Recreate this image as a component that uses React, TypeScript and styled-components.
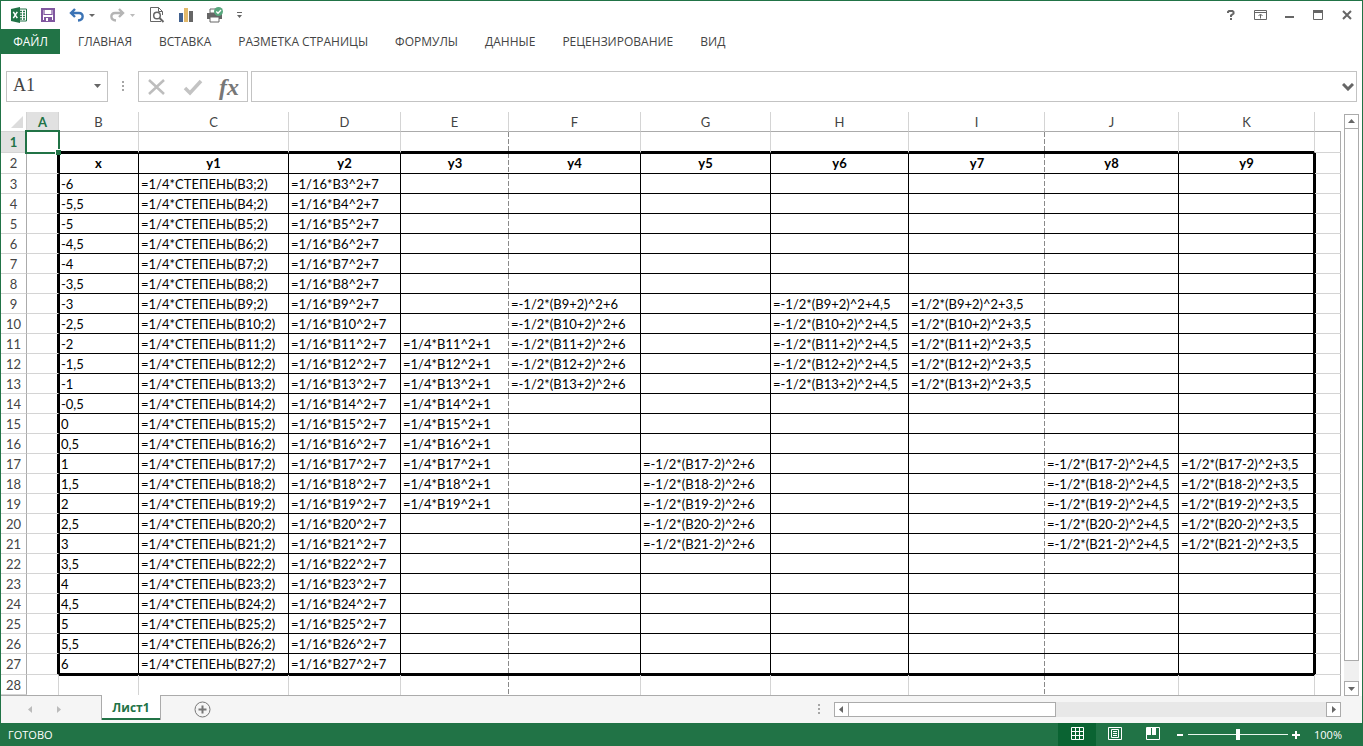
import React from 'react';
import styled, { createGlobalStyle, css } from 'styled-components';

const GREEN = '#217346';
const UI = '"Open Sans", "Noto Sans", sans-serif';

const GlobalStyle = createGlobalStyle`
  *, *::before, *::after { box-sizing: border-box; }
  body { margin: 0; background: #fff; }
  button, input { font: inherit; color: inherit; }
  button { background: none; border: 0; padding: 0; display: flex; align-items: center; justify-content: center; }
  svg { display: block; }
`;

const Window = styled.div`
  display: flex;
  flex-direction: column;
  min-height: 100vh;
  border: 1px solid ${GREEN};
  border-bottom: 0;
  background: #fff;
  color: #444;
  font: 12px/16px ${UI};
`;

const TitleBar = styled.header`
  display: flex;
  justify-content: space-between;
  height: 28px;
  padding: 0 5px 0 8px;
`;
const ToolGroup = styled.div<{ $gap: number }>`
  display: flex;
  align-items: center;
  gap: ${p => p.$gap}px;
`;
const IconButton = styled.button<{ $w?: number }>`
  width: ${p => p.$w ?? 20}px;
  height: 20px;
`;
const RedoButton = styled(IconButton)`
  padding-left: 10px;
`;

const Ribbon = styled.nav`
  display: flex;
  align-items: stretch;
  height: 25px;
  gap: 27px;
`;
const RibbonTab = styled.button`
  color: #444;
`;
const FileTab = styled(RibbonTab)`
  width: 59px;
  background: ${GREEN};
  color: #fff;
  margin-right: -9px;
`;

const FormulaRow = styled.div`
  display: flex;
  margin: 17px 5px 10px 5px;
  height: 31px;
`;
const Box = styled.div`
  display: flex;
  align-items: center;
  border: 1px solid #c3c3c3;
`;
const NameBox = styled(Box)`
  width: 102px;
  padding: 0 6px;
`;
const NameInput = styled.input`
  flex: 1;
  min-width: 0;
  height: 26px;
  border: 0;
  padding: 0 0 2px;
  outline: 0;
  font: 18px/24px "Liberation Serif", serif;
`;
const Dots = styled.div`
  display: flex;
  align-items: center;
  justify-content: center;
  width: 30px;
`;
const FxBox = styled(Box)`
  width: 110px;
  justify-content: space-between;
  padding: 0 8px;
  margin-right: 3px;
`;
const FxButton = styled.button`
  font: italic 700 24px/24px "Liberation Serif", serif;
  color: #777;
`;
const FormulaBox = styled(Box)`
  flex: 1;
  padding-right: 2px;
`;
const FormulaInput = styled.input`
  flex: 1;
  height: 28px;
  border: 0;
  outline: 0;
  background: transparent;
`;

const SheetArea = styled.main`
  display: flex;
  flex: 1;
`;
const Grid = styled.table`
  flex: 1;
  width: 0;
  table-layout: fixed;
  border-collapse: separate;
  border-spacing: 0;
  border-bottom: 1px solid #ababab;
  font-family: Lato, "Open Sans", sans-serif;
  font-size: 13px;
  line-height: 18px;
`;
const Row = styled.tr<{ $h: number }>`
  height: ${p => p.$h}px;
`;
const headBase = css<{ $on?: boolean }>`
  padding: 0;
  text-align: center;
  color: ${p => (p.$on ? GREEN : '#444')};
  font-weight: ${p => (p.$on ? 700 : 400)};
  background: ${p => (p.$on ? '#e1e1e1' : '#fff')};
`;
const ColHead = styled.th<{ $on?: boolean }>`
  ${headBase}
  border-right: 1px solid #d4d4d4;
  border-bottom: 1px solid ${p => (p.$on ? GREEN : '#ababab')};
`;
const FillerHead = styled.td`
  padding: 0;
  border-bottom: 1px solid #ababab;
`;
const RowHead = styled.th<{ $on?: boolean }>`
  ${headBase}
  border-right: 1px solid #ababab;
  border-bottom: 1px solid #d4d4d4;
`;
const Corner = styled.td`
  padding: 0 3px 3px 0;
  border-bottom: 1px solid #d4d4d4;
  border-right: 1px solid #d4d4d4;
  vertical-align: bottom;
  svg { margin-left: auto; }
`;
const Cell = styled.td<{ $right: string; $bottom: string; $shadow: string; $head?: boolean; $dashed?: boolean }>`
  position: relative;
  padding: ${p => (p.$head ? 0 : '0 0 0 2px')};
  overflow: hidden;
  white-space: nowrap;
  color: #000;
  border-right: ${p => p.$right};
  border-bottom: ${p => p.$bottom};
  box-shadow: ${p => p.$shadow};
  text-align: ${p => (p.$head ? 'center' : 'left')};
  font-weight: ${p => (p.$head ? 700 : 400)};
  ${p => p.$dashed && css`
    background: repeating-linear-gradient(#8a8a8a 0 5px, #fff 5px 7px) right top / 1px 100% no-repeat;
  `}
`;
const ActiveCell = styled(Cell)`
  overflow: visible;
`;
const Selection = styled.div`
  position: absolute;
  inset: -2px;
  border: 2px solid ${GREEN};
  z-index: 1;
  &::after {
    content: '';
    position: absolute;
    right: -3px;
    bottom: -3px;
    width: 6px;
    height: 6px;
    background: ${GREEN};
    border-left: 1px solid #fff;
    border-top: 1px solid #fff;
  }
`;

const VScroll = styled.div`
  display: flex;
  flex-direction: column;
  width: 15px;
  margin: 2px 3px 0 3px;
  background: #f0f0f0;
`;
const ScrollButton = styled.button`
  width: 15px;
  height: 15px;
  border: 1px solid #ababab;
  background: #fff;
  flex: none;
`;
const VThumb = styled.div`
  height: 533px;
  margin-top: -1px;
  margin-bottom: auto;
  border: 1px solid #ababab;
  background: #fff;
`;

const TabBar = styled.div`
  display: flex;
  height: 27px;
  background: #f5f5f5;
`;
const SheetNav = styled.div`
  display: flex;
  align-items: center;
  width: 100px;
  padding-left: 19px;
  gap: 9px;
`;
const SheetTab = styled.button`
  width: 60px;
  height: 25px;
  background: #fff;
  border: solid #ababab;
  border-width: 0 1px;
  box-shadow: inset 0 -2px ${GREEN};
  margin-top: -1px;
  color: ${GREEN};
  font: 700 12px/18px ${UI};
`;
const AddSheet = styled.button`
  margin-left: 32px;
  width: 18px;
`;
const TabSpacer = styled.div`
  flex: 1;
`;
const HScroll = styled.div`
  display: flex;
  width: 507px;
  height: 15px;
  margin: 6px 21px 0 0;
  background: #e8e8e8;
`;
const HThumb = styled.div`
  width: 208px;
  margin-left: -1px;
  margin-right: auto;
  border: 1px solid #ababab;
  background: #fff;
`;

const StatusBar = styled.footer`
  display: flex;
  align-items: center;
  justify-content: space-between;
  height: 23px;
  padding: 0 21px 0 8px;
  margin: 0 -1px;
  background: ${GREEN};
  color: #fff;
  font-size: 11px;
`;
const ViewGroup = styled.div`
  display: flex;
  align-items: center;
`;
const ViewButton = styled.button<{ $on?: boolean }>`
  width: 38px;
  height: 23px;
  padding-bottom: 2px;
  background: ${p => (p.$on ? '#0a6332' : 'transparent')};
`;
const ZoomButton = styled.button`
  width: 16px;
  height: 23px;
`;
const ZoomRange = styled.input`
  appearance: none;
  width: 100px;
  height: 12px;
  margin: 0;
  background: linear-gradient(#e8f5ec, #e8f5ec) center / 100% 1px no-repeat;
  &::-webkit-slider-thumb {
    appearance: none;
    width: 4px;
    height: 11px;
    background: #fff;
  }
`;
const ZoomValue = styled.span`
  width: 38px;
  text-align: right;
`;

const letters = ['A', 'B', 'C', 'D', 'E', 'F', 'G', 'H', 'I', 'J', 'K'];
const widths = [32, 80, 150, 112, 108, 132, 130, 138, 136, 134, 136];
const rows = Array.from({ length: 28 }, (_, i) => i + 1);
const tall = [1, 2, 27];
const pageBreaks = ['E', 'I'];

const between = (r: number, a: number, b: number) => r >= a && r <= b;

function cellText(col: string, r: number): string {
  if (r === 2) return col === 'B' ? 'x' : col === 'A' ? '' : 'y' + (letters.indexOf(col) - 1);
  if (!between(r, 3, 27)) return '';
  switch (col) {
    case 'B': return String((r - 15) / 2).replace('.', ',');
    case 'C': return `=1/4*СТЕПЕНЬ(B${r};2)`;
    case 'D': return `=1/16*B${r}^2+7`;
    case 'E': return between(r, 11, 19) ? `=1/4*B${r}^2+1` : '';
    case 'F': return between(r, 9, 13) ? `=-1/2*(B${r}+2)^2+6` : '';
    case 'G': return between(r, 17, 21) ? `=-1/2*(B${r}-2)^2+6` : '';
    case 'H': return between(r, 9, 13) ? `=-1/2*(B${r}+2)^2+4,5` : '';
    case 'I': return between(r, 9, 13) ? `=1/2*(B${r}+2)^2+3,5` : '';
    case 'J': return between(r, 17, 21) ? `=-1/2*(B${r}-2)^2+4,5` : '';
    case 'K': return between(r, 17, 21) ? `=1/2*(B${r}-2)^2+3,5` : '';
    default: return '';
  }
}

// Borders of one cell; the medium frame round B2:K27 is a border line plus an inset line on both sides.
function cellLines(c: number, r: number) {
  const inCols = c >= 1 && c <= 10;
  const inRows = r >= 2 && r <= 27;
  const light = '1px solid #d4d4d4';
  const black = '1px solid #000';
  const dashed = pageBreaks.includes(letters[c]);
  let right = inRows && c <= 10 ? black : light;
  if (dashed) right = '0';
  if (c === 11) right = '1px solid #ababab';
  const bottom = inCols && r >= 1 && r <= 27 ? black : light;
  const s: string[] = [];
  if (inCols && (r === 1 || r === 27)) s.push('inset 0 -1px #000');
  if (inCols && (r === 2 || r === 28)) s.push('inset 0 1px #000');
  if (inRows && (c === 0 || c === 10)) s.push('inset -1px 0 #000');
  if (inRows && (c === 1 || c === 11)) s.push('inset 1px 0 #000');
  return { right, dashed, bottom: r === 28 ? '0' : bottom, shadow: s.join(', ') || 'none' };
}

const Arrow = ({ d, fill = '#666', w = 7, h = 7 }: { d: string; fill?: string; w?: number; h?: number }) => (
  <svg width={w} height={h} viewBox={`0 0 ${w} ${h}`}><path d={d} fill={fill} /></svg>
);

const ThreeDots = () => (
  <svg width="3" height="11" fill="#a6a6a6"><path d="M0 0h2v2H0zM0 4h2v2H0zM0 8h2v2H0z" /></svg>
);

function QuickAccess() {
  return (
    <ToolGroup $gap={0}>
      <IconButton aria-label="Excel">
        <svg width="18" height="18" viewBox="0 0 18 18">
          <path d="M9 3h7.500v12H9z" fill="#fff" stroke={GREEN} />
          <path d="M10 5.500h2m1 0h2M10 8h2m1 0h2m-5 2.500h2m1 0h2M10 13h2m1 0h2" stroke={GREEN} strokeWidth="1.300" />
          <path d="M1 3l9-2v16l-9-2z" fill={GREEN} />
          <path d="M3.300 5.800l4 6.400M7.300 5.800l-4 6.400" stroke="#fff" strokeWidth="1.500" />
        </svg>
      </IconButton>
      <IconButton aria-label="Сохранить" $w={38}>
        <svg width="16" height="16" viewBox="0 0 16 16">
          <path d="M2 2h12v12H2z" fill="#fff" stroke="#80579f" strokeWidth="2" />
          <path d="M4 2v5.500h8V2" stroke="#80579f" strokeWidth="1.200" fill="none" />
          <path d="M4 10h8v4H4z" fill="#80579f" /><path d="M6 11h2v3H6z" fill="#fff" />
        </svg>
      </IconButton>
      <IconButton aria-label="Отменить">
        <svg width="16" height="16" viewBox="0 0 16 16">
          <path d="M6 2L2 6l4 4M2.500 6H10c5 0 5 7-1 7.500" fill="none" stroke="#3b73b5" strokeWidth="2.400" />
        </svg>
      </IconButton>
      <IconButton aria-label="Список отмены" $w={10}><Arrow d="M0 2h6L3 5z" w={6} /></IconButton>
      <RedoButton aria-label="Вернуть" $w={30}>
        <svg width="16" height="16" viewBox="0 0 16 16">
          <path d="M10 2l4 4-4 4M13.500 6H6C1 6 1 13 7 13.500" fill="none" stroke="#b5b5b5" strokeWidth="2.400" />
        </svg>
      </RedoButton>
      <IconButton aria-label="Список возврата" $w={10}><Arrow d="M0 2h5L2.500 5z" w={5} fill="#bbb" /></IconButton>
      <IconButton aria-label="Просмотр" $w={40}>
        <svg width="16" height="18" viewBox="0 0 16 18" fill="none" stroke="#666">
          <path d="M12 15.500H1.500v-14h8l4 4V9M9.500 1.500v4h4" />
          <circle cx="8" cy="9.500" r="3.300" strokeWidth="1.500" fill="#fff" /><path d="M10.500 12l4 4" strokeWidth="2" />
        </svg>
      </IconButton>
      <IconButton aria-label="Диаграмма" $w={18}>
        <svg width="16" height="16" viewBox="0 0 16 16">
          <path d="M1 6h4v9H1z" fill="#41618f" /><path d="M6 1h4v14H6z" fill="#e3b96a" /><path d="M11 4h4v11h-4z" fill="#666" />
        </svg>
      </IconButton>
      <IconButton aria-label="Печать" $w={40}>
        <svg width="18" height="18" viewBox="0 0 18 18">
          <path d="M1 7h15v6H1z" fill="#666" /><path d="M4 3h6v4H4z" fill="#fff" stroke="#666" />
          <path d="M4 11h9v5H4z" fill="#fff" stroke="#666" /><circle cx="12.500" cy="5.500" r="4.500" fill="#58a77d" />
          <path d="M10.300 5.500l1.700 1.700L15 4" stroke="#fff" strokeWidth="1.300" fill="none" />
        </svg>
      </IconButton>
      <IconButton aria-label="Настройка панели" $w={8}><Arrow d="M0 0h5v1H0zM0 3h5L2.500 6z" w={5} /></IconButton>
    </ToolGroup>
  );
}

function WindowButtons() {
  return (
    <ToolGroup $gap={9}>
      <IconButton aria-label="Справка">
        <svg width="8" height="10" viewBox="0 0 8 10"><path d="M1 3V2l1-1h3.500l1 1v1.500L4 5.500V7" fill="none" stroke="#666" strokeWidth="2" /><path d="M3 8h2v2H3z" fill="#666" /></svg>
      </IconButton>
      <IconButton aria-label="Параметры ленты">
        <svg width="13" height="10" viewBox="0 0 13 10" fill="none" stroke="#666"><path d="M.5.5h12v9H.5zM.5 2.500h12M6.500 8.500V4.500M4.500 6l2-2 2 2" /></svg>
      </IconButton>
      <IconButton aria-label="Свернуть"><svg width="9" height="10"><path d="M0 6h9v2H0z" fill="#666" /></svg></IconButton>
      <IconButton aria-label="Развернуть"><svg width="10" height="10"><path d="M.5.5h9v9h-9z" fill="none" stroke="#666" /><path d="M0 0h10v3H0z" fill="#666" /></svg></IconButton>
      <IconButton aria-label="Закрыть"><svg width="10" height="10"><path d="M1 1l8 8M9 1L1 9" stroke="#666" strokeWidth="2" /></svg></IconButton>
    </ToolGroup>
  );
}

export default function App() {
  return (
    <Window>
      <GlobalStyle />
      <TitleBar><QuickAccess /><WindowButtons /></TitleBar>
      <Ribbon>
        <FileTab>ФАЙЛ</FileTab>
        {['ГЛАВНАЯ', 'ВСТАВКА', 'РАЗМЕТКА СТРАНИЦЫ', 'ФОРМУЛЫ', 'ДАННЫЕ', 'РЕЦЕНЗИРОВАНИЕ', 'ВИД'].map(t => (
          <RibbonTab key={t}>{t}</RibbonTab>
        ))}
      </Ribbon>
      <FormulaRow>
        <NameBox>
          <NameInput aria-label="Имя" defaultValue="A1" />
          <button aria-label="Список имён"><Arrow d="M0 1h7L3.500 5z" /></button>
        </NameBox>
        <Dots><ThreeDots /></Dots>
        <FxBox>
          <button aria-label="Отмена"><svg width="20" height="20"><path d="M2 3l15 14M17 3L2 17" stroke="#bdbdbd" strokeWidth="2.500" /></svg></button>
          <button aria-label="Ввод"><svg width="20" height="20"><path d="M2 11l5 5L18 4" fill="none" stroke="#c3c3c3" strokeWidth="3.500" /></svg></button>
          <FxButton aria-label="Вставить функцию">fx</FxButton>
        </FxBox>
        <FormulaBox>
          <FormulaInput aria-label="Строка формул" />
          <button aria-label="Развернуть строку формул"><svg width="12" height="8"><path d="M1 1l5 5 5-5" fill="none" stroke="#666" strokeWidth="3" /></svg></button>
        </FormulaBox>
      </FormulaRow>
      <SheetArea>
        <Grid>
          <colgroup>
            <col width={26} />
            {widths.map((w, i) => <col key={i} width={w} />)}
            <col />
          </colgroup>
          <thead>
            <Row $h={20}>
              <Corner><svg width="12" height="12"><path d="M12 0v12H0z" fill="#dcdcdc" /></svg></Corner>
              {letters.map(l => <ColHead key={l} $on={l === 'A'}>{l}</ColHead>)}
              <FillerHead />
            </Row>
          </thead>
          <tbody>
            {rows.map(r => (
              <Row key={r} $h={tall.includes(r) ? 21 : 20}>
                <RowHead $on={r === 1}>{r}</RowHead>
                {[...letters, ''].map((l, c) => {
                  const { right, bottom, shadow, dashed } = cellLines(c, r);
                  const C = c === 0 && r === 1 ? ActiveCell : Cell;
                  return (
                    <C key={c} $right={right} $bottom={bottom} $shadow={shadow} $dashed={dashed} $head={r === 2}>
                      {c === 0 && r === 1 ? <Selection /> : l && cellText(l, r)}
                    </C>
                  );
                })}
              </Row>
            ))}
          </tbody>
        </Grid>
        <VScroll>
          <ScrollButton aria-label="Вверх"><Arrow d="M0 5h7L3.500 1z" /></ScrollButton>
          <VThumb />
          <ScrollButton aria-label="Вниз"><Arrow d="M0 2h7L3.500 6z" /></ScrollButton>
        </VScroll>
      </SheetArea>
      <TabBar>
        <SheetNav>
          <IconButton aria-label="Предыдущий лист"><Arrow d="M5 0v7L1 3.500z" fill="#bbb" /></IconButton>
          <IconButton aria-label="Следующий лист"><Arrow d="M1 0v7l4-3.500z" fill="#bbb" /></IconButton>
        </SheetNav>
        <SheetTab>Лист1</SheetTab>
        <AddSheet aria-label="Новый лист">
          <svg width="17" height="17" fill="none" stroke="#777"><circle cx="8.500" cy="8.500" r="7.500" /><path d="M8.500 4.500v8M4.500 8.500h8" strokeWidth="2" /></svg>
        </AddSheet>
        <TabSpacer />
        <Dots><ThreeDots /></Dots>
        <HScroll>
          <ScrollButton aria-label="Влево"><Arrow d="M5 0v7L1 3.500z" /></ScrollButton>
          <HThumb />
          <ScrollButton aria-label="Вправо"><Arrow d="M2 0v7l4-3.500z" /></ScrollButton>
        </HScroll>
      </TabBar>
      <StatusBar>
        <span>ГОТОВО</span>
        <ViewGroup>
          <ViewButton $on aria-label="Обычный"><svg width="13" height="13" fill="none" stroke="#fff"><path d="M.5.5h12v12H.5zM4.500 0v13M8.500 0v13M0 4.500h13M0 8.500h13" /></svg></ViewButton>
          <ViewButton aria-label="Разметка страницы"><svg width="14" height="13" fill="none" stroke="#fff"><path d="M.5.5h13v12H.5zM3.500 2.500h7v8h-7zM5 4.500h4M5 6.500h4M5 8.500h4" /></svg></ViewButton>
          <ViewButton aria-label="Страничный"><svg width="14" height="13"><path d="M.5.5h13v12H.5z" fill="none" stroke="#fff" /><path d="M1 1h4v7H1zM6 1h4v7H6z" fill="#fff" /></svg></ViewButton>
          <ZoomButton aria-label="Уменьшить"><svg width="6" height="2"><path d="M0 0h6v2H0z" fill="#fff" /></svg></ZoomButton>
          <ZoomRange type="range" aria-label="Масштаб" defaultValue={50} />
          <ZoomButton aria-label="Увеличить"><svg width="8" height="8"><path d="M3 0h2v3h3v2H5v3H3V5H0V3h3z" fill="#fff" /></svg></ZoomButton>
          <ZoomValue>100%</ZoomValue>
        </ViewGroup>
      </StatusBar>
    </Window>
  );
}
